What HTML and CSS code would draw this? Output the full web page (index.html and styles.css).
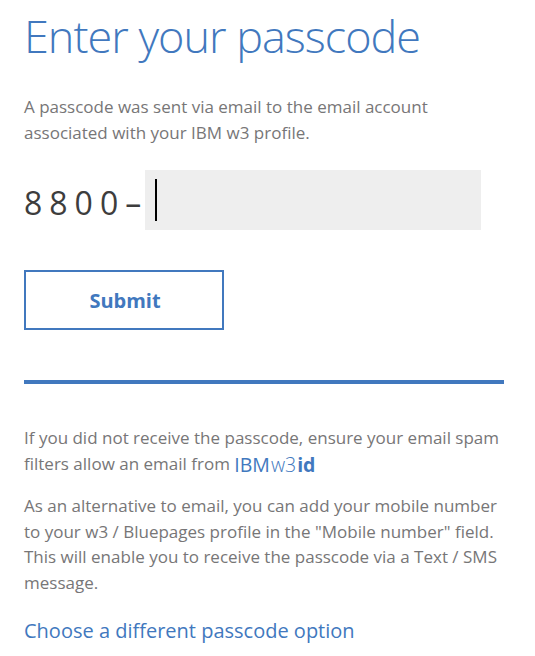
FILE: index.html
```html
<!DOCTYPE html>
<html lang="en">
<head>
<meta charset="utf-8">
<title>Enter your passcode</title>
<link rel="stylesheet" href="styles.css">
</head>
<body>
<main class="page">
  <h1 class="title">Enter your passcode</h1>
  <p class="intro">A passcode was sent via email to the email account associated with your IBM w3 profile.</p>
  <div class="code-row">
    <span class="prefix">8800–</span>
    <div class="code-input"><span class="caret"></span></div>
  </div>
  <button class="submit" type="button">Submit</button>
  <div class="rule"></div>
  <p class="note">If you did not receive the passcode, ensure your email spam filters allow an email from <span class="brand"><span class="brand-ibm">IBM</span><span class="brand-w3">w3</span><span class="brand-id">id</span></span></p>
  <p class="note">As an alternative to email, you can add your mobile number to your w3 / Bluepages profile in the "Mobile number" field. This will enable you to receive the passcode via a Text / SMS message.</p>
  <a class="alt-link" href="#">Choose a different passcode option</a>
</main>
</body>
</html>
```
FILE: styles.css
```css
* { box-sizing: border-box; }
html, body { margin: 0; padding: 0; background: #fff; }
body { font-family: "Open Sans", "Noto Sans", sans-serif; color: #777677; }
.page { width: 504px; padding: 0 0 0 24px; }
.title {
  margin: 0;
  padding-top: 8px;
  font-size: 45px;
  font-weight: 300;
  line-height: 56px;
  color: #4178be;
  letter-spacing: -1px;
}
.intro {
  margin: 30px 0 0;
  font-size: 17px;
  line-height: 26px;
}
.code-row {
  display: flex;
  align-items: stretch;
  margin-top: 24px;
  height: 60px;
}
.prefix {
  display: flex;
  align-items: center;
  width: 121px;
  font-size: 32px;
  letter-spacing: 7px;
  color: #3d3d3d;
  padding-top: 4px;
}
.code-input {
  width: 336px;
  background: #eeeeee;
  position: relative;
}
.caret {
  position: absolute;
  left: 10px;
  top: 9px;
  width: 2px;
  height: 42px;
  background: #000;
}
.submit {
  display: block;
  margin-top: 40px;
  width: 200px;
  height: 60px;
  border: 2px solid #4178be;
  background: #fff;
  color: #4178be;
  font-family: inherit;
  font-size: 20px;
  font-weight: 700;
  padding: 0 0 0 2px;
  cursor: pointer;
}
.rule {
  margin-top: 50px;
  height: 4px;
  background: #4178be;
}
.note {
  margin: 41px 0 0;
  font-size: 17px;
  line-height: 26px;
}
.note + .note { margin-top: 16px; line-height: 25.7px; }
.brand {
  color: #4178be;
  font-size: 19.5px;
  line-height: 20px;
  display: inline-block;
  vertical-align: -2px;
}
.brand-ibm { font-weight: 500; margin-right: 1px; }
.brand-w3 { font-weight: 300; margin-right: 1px; }
.brand-id { font-weight: 700; }
.alt-link {
  display: inline-block;
  margin-top: 21px;
  font-size: 20px;
  line-height: 28px;
  color: #4178be;
  text-decoration: none;
}
```
